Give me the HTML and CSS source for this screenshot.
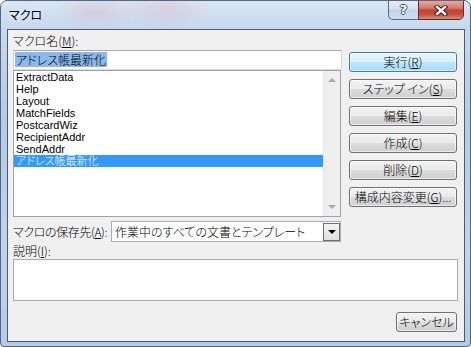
FILE: index.html
```html
<!DOCTYPE html>
<html lang="ja">

<head>
    <meta charset="UTF-8">
    <title>マクロ</title>
    <link rel="stylesheet" href="styles.css">
</head>

<body>
    <div class="window">
        <div class="titlebar">
            <span class="title">マクロ</span>
            <div class="caption-buttons">
                <div class="cap-btn help">?</div>
                <div class="cap-btn close">
                    <svg width="14" height="11" viewBox="0 0 14 11">
                        <path d="M3 2 L11 9 M11 2 L3 9" stroke="#3a1a16" stroke-width="4.4" stroke-linecap="square" fill="none"/>
                        <path d="M3 2 L11 9 M11 2 L3 9" stroke="#ffffff" stroke-width="2.4" stroke-linecap="square" fill="none"/>
                    </svg>
                </div>
            </div>
        </div>
        <div class="client">
            <div class="name-label">マクロ名(<u>M</u>):</div>
            <div class="main">
                <div class="left">
                    <div class="field"><span class="sel">アドレス帳最新化</span></div>
                    <div class="listbox">
                        <ul class="items">
                            <li>ExtractData</li>
                            <li>Help</li>
                            <li>Layout</li>
                            <li>MatchFields</li>
                            <li>PostcardWiz</li>
                            <li>RecipientAddr</li>
                            <li>SendAddr</li>
                            <li class="selected">アドレス帳最新化</li>
                        </ul>
                        <div class="scrollbar">
                            <span class="arrow up"></span>
                            <span class="arrow down"></span>
                        </div>
                    </div>
                </div>
                <div class="buttons">
                    <button class="btn default">実行(<u>R</u>)</button>
                    <button class="btn">ステップ イン(<u>S</u>)</button>
                    <button class="btn">編集(<u>E</u>)</button>
                    <button class="btn">作成(<u>C</u>)</button>
                    <button class="btn">削除(<u>D</u>)</button>
                    <button class="btn">構成内容変更(<u>G</u>)...</button>
                </div>
            </div>
            <div class="store-row">
                <span class="store-label">マクロの保存先(<u>A</u>):</span>
                <div class="combo">
                    <span>作業中のすべての文書とテンプレート</span>
                    <span class="drop"><span class="tri"></span></span>
                </div>
            </div>
            <div class="desc-label">説明(<u>I</u>):</div>
            <div class="desc"></div>
            <div class="footer">
                <button class="btn cancel">キャンセル</button>
            </div>
        </div>
    </div>
</body>

</html>
```

FILE: styles.css
```css
* {
    margin: 0;
    padding: 0;
    box-sizing: border-box;
}

body {
    background: #ffffff;
    font-family: "Noto Sans CJK JP", sans-serif;
    font-size: 12px;
    font-weight: 300;
    line-height: 12px;
    color: #000;
    font-feature-settings: "palt";
}

u {
    text-decoration: underline;
    text-underline-offset: 1px;
}

.window {
    width: 471px;
    height: 347px;
    border: 1px solid #56677d;
    border-radius: 7px 7px 4px 4px;
    overflow: hidden;
    display: flex;
    flex-direction: column;
    background:
        radial-gradient(ellipse 40px 20px at 95px 10px, rgba(215, 160, 175, 0.3), rgba(215, 160, 175, 0)),
        radial-gradient(ellipse 45px 20px at 165px 8px, rgba(215, 160, 175, 0.28), rgba(215, 160, 175, 0)),
        linear-gradient(to bottom, #dae6f4 0, #c6d8ed 28px, #b3cbe6 120px, #c0d4eb 250px, #b4cbe6 100%);
}

/* title bar */
.titlebar {
    height: 28px;
    display: flex;
    justify-content: space-between;
    align-items: flex-start;
    padding-left: 8px;
}

.title {
    margin-top: 8px;
    font-weight: 400;
    text-shadow: 0 0 5px rgba(255, 255, 255, 0.9);
}

.caption-buttons {
    display: flex;
    margin-top: -1px;
    margin-right: 6px;
}

.cap-btn {
    height: 20px;
    border: 1px solid #5a6a80;
    display: flex;
    align-items: center;
    justify-content: center;
}

.help {
    width: 30px;
    border-right: none;
    border-radius: 0 0 0 5px;
    background: linear-gradient(#e4ecf6, #d5e1ef 45%, #c3d4e8 50%, #cddcee);
    font-family: "DejaVu Sans", sans-serif;
    font-weight: bold;
    font-size: 13px;
    color: #fff;
    text-shadow: 1px 0 0 #3f4d60, -1px 0 0 #3f4d60, 0 1px 0 #3f4d60, 0 -1px 0 #3f4d60;
}

.close {
    width: 46px;
    border-radius: 0 0 5px 0;
    border-color: #5b2d2a;
    background: linear-gradient(#e7a99f, #d47a6b 40%, #c0432f 50%, #c4503d 75%, #d98b73);
}

/* client area */
.client {
    flex: 1;
    margin: 0 5px 4px 6px;
    border: 1px solid #4b5b6e;
    background: #f0f0f0;
    padding: 0 6px 0 5px;
    display: flex;
    flex-direction: column;
}

.name-label {
    height: 20px;
    padding-top: 5px;
}

.main {
    display: flex;
    height: 167px;
}

.left {
    width: 329px;
}

.field {
    height: 20px;
    border: 1px solid;
    border-color: #a9abb2 #cfd2d8 #d8dce2 #cfd2d8;
    background: #fff;
    padding: 1px 0 0 1px;
}

.sel {
    display: inline-block;
    height: 15px;
    line-height: 15px;
    padding: 0 1px;
    background: #8bb9ee;
}

.listbox {
    width: 328px;
    height: 147px;
    border: 1px solid #a0a2a8;
    background: #fff;
    display: flex;
}

.items {
    list-style: none;
    width: 309px;
}

.items li {
    height: 12px;
    line-height: 12px;
    font-family: "Liberation Sans", "Noto Sans CJK JP", sans-serif;
    font-size: 11px;
    padding-left: 2px;
    white-space: nowrap;
}

.items li.selected {
    background: #3399ff;
    color: #fff;
}

.scrollbar {
    width: 17px;
    background: #efefef;
    border-left: 1px solid #e6e6e6;
    display: flex;
    flex-direction: column;
    justify-content: space-between;
    align-items: center;
    padding: 7px 0;
}

.arrow {
    width: 0;
    height: 0;
    border-left: 4px solid transparent;
    border-right: 4px solid transparent;
}

.arrow.up {
    border-bottom: 4px solid #a8a8a8;
}

.arrow.down {
    border-top: 4px solid #a8a8a8;
}

.buttons {
    width: 108px;
    margin-left: 7px;
    padding-top: 2px;
    display: flex;
    flex-direction: column;
    gap: 7px;
}

.btn {
    height: 20px;
    width: 108px;
    border: 1px solid #707070;
    border-radius: 3px;
    background: linear-gradient(#f2f2f2, #ebebeb 50%, #dddddd 50%, #cfcfcf);
    box-shadow: inset 0 0 0 1px rgba(255, 255, 255, 0.6);
    font: inherit;
    color: #000;
    text-align: center;
    padding: 0;
}

.btn.default {
    border-color: #3c7fb1;
    background: linear-gradient(#eaf6fd, #d9f0fc 50%, #bee6fd 50%, #a7d9f5);
}

.store-row {
    display: flex;
    align-items: center;
    height: 21px;
    margin-top: 4px;
}

.store-label {
    flex: none;
    width: 98px;
    white-space: nowrap;
    letter-spacing: -0.4px;
}

.combo {
    width: 230px;
    height: 21px;
    border: 1px solid #a9abb2;
    background: #fff;
    display: flex;
    align-items: center;
    justify-content: space-between;
    padding-left: 3px;
}

.drop {
    width: 17px;
    height: 18px;
    border: 1px solid #6f6f6f;
    background: linear-gradient(#f4f4f4, #dedede);
    display: flex;
    align-items: center;
    justify-content: center;
}

.tri {
    width: 0;
    height: 0;
    border-left: 4px solid transparent;
    border-right: 4px solid transparent;
    border-top: 4px solid #000;
}

.desc-label {
    height: 17px;
    padding-top: 3px;
}

.desc {
    height: 42px;
    border: 1px solid #a9abb2;
    background: #fff;
}

.footer {
    display: flex;
    justify-content: flex-end;
    margin-top: 11px;
    padding-right: 1px;
}

.btn.cancel {
    width: 61px;
}
```
